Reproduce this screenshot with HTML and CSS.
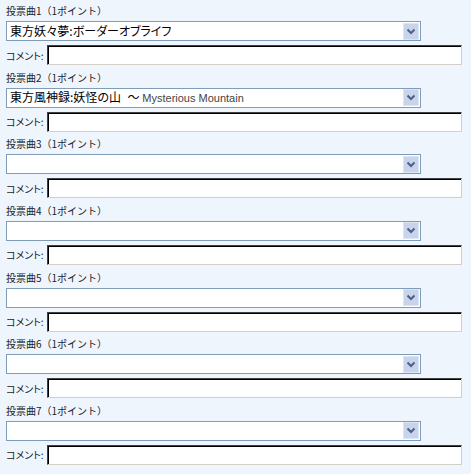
FILE: index.html
```html
<!DOCTYPE html>
<html lang="ja">

<head>
    <meta charset="utf-8">
    <meta name="viewport" content="width=device-width, initial-scale=1.0">
    <title>投票</title>

    <link rel="stylesheet" href="styles.css">
</head>

<body>
    <form class="ballot">

        <div class="song">
            <div class="song-title">投票曲1（1ポイント）</div>
            <div class="pick">
                <span class="pick-value">東方妖々夢:ボーダーオブライフ</span>
                <span class="pick-arrow"><svg width="16" height="17" viewBox="0 0 16 17"><polyline points="4.5,6.5 8,10 11.5,6.5" /></svg></span>
            </div>
            <div class="comment"><label>コメント:</label><input type="text"></div>
        </div>

        <div class="song">
            <div class="song-title">投票曲2（1ポイント）</div>
            <div class="pick">
                <span class="pick-value">東方風神録:妖怪の山 <span class="tilde">〜</span> <span class="latin">Mysterious Mountain</span></span>
                <span class="pick-arrow"><svg width="16" height="17" viewBox="0 0 16 17"><polyline points="4.5,6.5 8,10 11.5,6.5" /></svg></span>
            </div>
            <div class="comment"><label>コメント:</label><input type="text"></div>
        </div>

        <div class="song">
            <div class="song-title">投票曲3（1ポイント）</div>
            <div class="pick">
                <span class="pick-value"></span>
                <span class="pick-arrow"><svg width="16" height="17" viewBox="0 0 16 17"><polyline points="4.5,6.5 8,10 11.5,6.5" /></svg></span>
            </div>
            <div class="comment"><label>コメント:</label><input type="text"></div>
        </div>

        <div class="song">
            <div class="song-title">投票曲4（1ポイント）</div>
            <div class="pick">
                <span class="pick-value"></span>
                <span class="pick-arrow"><svg width="16" height="17" viewBox="0 0 16 17"><polyline points="4.5,6.5 8,10 11.5,6.5" /></svg></span>
            </div>
            <div class="comment"><label>コメント:</label><input type="text"></div>
        </div>

        <div class="song">
            <div class="song-title">投票曲5（1ポイント）</div>
            <div class="pick">
                <span class="pick-value"></span>
                <span class="pick-arrow"><svg width="16" height="17" viewBox="0 0 16 17"><polyline points="4.5,6.5 8,10 11.5,6.5" /></svg></span>
            </div>
            <div class="comment"><label>コメント:</label><input type="text"></div>
        </div>

        <div class="song">
            <div class="song-title">投票曲6（1ポイント）</div>
            <div class="pick">
                <span class="pick-value"></span>
                <span class="pick-arrow"><svg width="16" height="17" viewBox="0 0 16 17"><polyline points="4.5,6.5 8,10 11.5,6.5" /></svg></span>
            </div>
            <div class="comment"><label>コメント:</label><input type="text"></div>
        </div>

        <div class="song">
            <div class="song-title">投票曲7（1ポイント）</div>
            <div class="pick">
                <span class="pick-value"></span>
                <span class="pick-arrow"><svg width="16" height="17" viewBox="0 0 16 17"><polyline points="4.5,6.5 8,10 11.5,6.5" /></svg></span>
            </div>
            <div class="comment"><label>コメント:</label><input type="text"></div>
        </div>

    </form>
</body>

</html>
```

FILE: styles.css
```css
* {
    box-sizing: border-box;
}

body {
    margin: 0;
    background-color: #eef5fd;
    color: #222;
    font-family: "Noto Sans CJK JP", sans-serif;
    font-feature-settings: "palt";
}

.ballot {
    padding: 0 6px;
}

.song {
    height: 66.67px;
}

.song-title {
    height: 21px;
    line-height: 21px;
    font-size: 10px;
    font-feature-settings: normal;
}

/* select box, xp look */
.pick {
    display: flex;
    align-items: center;
    width: 415px;
    height: 20px;
    padding: 0 1px 0 3px;
    background-color: #fff;
    border: solid 1px #7f9db9;
}

.pick-value {
    flex: 1;
    font-size: 12px;
    line-height: 18px;
    color: #000;
    white-space: nowrap;
    overflow: hidden;
}

.tilde {
    margin-left: 4px;
    font-feature-settings: normal;
}

.latin {
    font-family: "Liberation Sans", sans-serif;
    font-size: 11px;
    color: #444;
}

.pick-arrow {
    width: 16px;
    height: 17px;
    background-color: #c8d4ec;
    border: solid 1px #dde5f4;
}

.pick-arrow svg {
    display: block;
    margin: -1px;
}

.pick-arrow polyline {
    fill: none;
    stroke: #4d6185;
    stroke-width: 2;
}

.comment {
    display: flex;
    align-items: center;
    margin-top: 4px;
}

.comment label {
    width: 41px;
    font-size: 10px;
}

.comment input {
    width: 415px;
    height: 20px;
    margin: 0;
    padding: 0 2px;
    background-color: #fff;
    border: solid 1px;
    border-color: #404040 #d4d0c8 #d4d0c8 #404040;
    box-shadow: inset 1px 1px 0 #000;
}
```
